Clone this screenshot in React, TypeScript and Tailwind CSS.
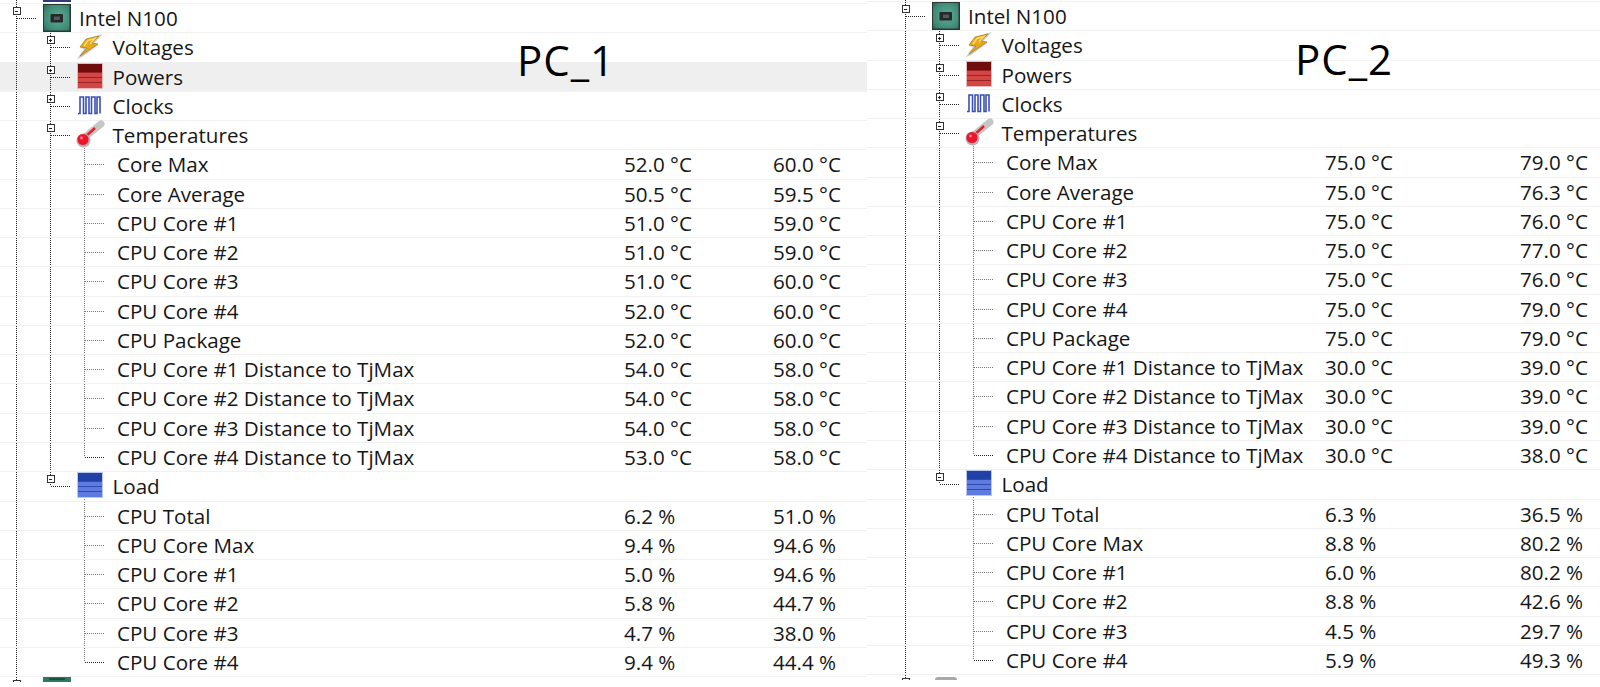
import { useId } from "react";

type Vals = [string, string];

const tempNames = [
  "Core Max",
  "Core Average",
  "CPU Core #1",
  "CPU Core #2",
  "CPU Core #3",
  "CPU Core #4",
  "CPU Package",
  "CPU Core #1 Distance to TjMax",
  "CPU Core #2 Distance to TjMax",
  "CPU Core #3 Distance to TjMax",
  "CPU Core #4 Distance to TjMax",
];
const loadNames = ["CPU Total", "CPU Core Max", "CPU Core #1", "CPU Core #2", "CPU Core #3", "CPU Core #4"];

const pc1 = {
  title: "PC_1",
  temps: [
    ["52.0 °C", "60.0 °C"],
    ["50.5 °C", "59.5 °C"],
    ["51.0 °C", "59.0 °C"],
    ["51.0 °C", "59.0 °C"],
    ["51.0 °C", "60.0 °C"],
    ["52.0 °C", "60.0 °C"],
    ["52.0 °C", "60.0 °C"],
    ["54.0 °C", "58.0 °C"],
    ["54.0 °C", "58.0 °C"],
    ["54.0 °C", "58.0 °C"],
    ["53.0 °C", "58.0 °C"],
  ] as Vals[],
  loads: [
    ["6.2 %", "51.0 %"],
    ["9.4 %", "94.6 %"],
    ["5.0 %", "94.6 %"],
    ["5.8 %", "44.7 %"],
    ["4.7 %", "38.0 %"],
    ["9.4 %", "44.4 %"],
  ] as Vals[],
};

const pc2 = {
  title: "PC_2",
  temps: [
    ["75.0 °C", "79.0 °C"],
    ["75.0 °C", "76.3 °C"],
    ["75.0 °C", "76.0 °C"],
    ["75.0 °C", "77.0 °C"],
    ["75.0 °C", "76.0 °C"],
    ["75.0 °C", "79.0 °C"],
    ["75.0 °C", "79.0 °C"],
    ["30.0 °C", "39.0 °C"],
    ["30.0 °C", "39.0 °C"],
    ["30.0 °C", "39.0 °C"],
    ["30.0 °C", "38.0 °C"],
  ] as Vals[],
  loads: [
    ["6.3 %", "36.5 %"],
    ["8.8 %", "80.2 %"],
    ["6.0 %", "80.2 %"],
    ["8.8 %", "42.6 %"],
    ["4.5 %", "29.7 %"],
    ["5.9 %", "49.3 %"],
  ] as Vals[],
};

const ROW_H = 29.28;

function Line({ x1, y1, x2, y2, light }: { x1: number; y1: number; x2: number; y2: number; light?: boolean }) {
  return (
    <line
      x1={x1}
      y1={y1}
      x2={x2}
      y2={y2}
      stroke={light ? "#777777" : "#222222"}
      strokeWidth="1"
      strokeDasharray="1 1"
      shapeRendering="crispEdges"
    />
  );
}

function ExpandBox({ x, y, open }: { x: number; y: number; open: boolean }) {
  return (
    <g shapeRendering="crispEdges">
      <rect x={x - 3} y={y - 3} width="7" height="7" fill="#fff" stroke="#333" strokeWidth="1" />
      <line x1={x - 1} y1={y + 0.5} x2={x + 2} y2={y + 0.5} stroke="#222" strokeWidth="1" />
      {!open && <line x1={x + 0.5} y1={y - 1} x2={x + 0.5} y2={y + 2} stroke="#222" strokeWidth="1" />}
    </g>
  );
}

function ChipIcon() {
  const id = useId();
  return (
    <g>
      <defs>
        <radialGradient id={id} cx="0.55" cy="0.5" r="0.75">
          <stop offset="0" stopColor="#5cae97" />
          <stop offset="0.7" stopColor="#3f8a76" />
          <stop offset="1" stopColor="#2a6456" />
        </radialGradient>
      </defs>
      <rect x="43" y="0" width="28" height="28" fill="#2a3834" />
      <rect x="44" y="1" width="25.5" height="25.5" fill={`url(#${id})`} />
      <rect x="50.5" y="10" width="12.5" height="8.5" rx="1" fill="#25292a" />
      <rect x="54" y="12.5" width="6" height="3.5" fill="#555758" />
    </g>
  );
}

function BoltIcon() {
  return (
    <g>
      <path d="M77 26 L84 16 L80 15 L90 5 L103 1 L94 10 L98 12 L82 24 Z" fill="#9a9a9a" opacity="0.55" />
      <path d="M86 6 L99 3 L92 10 L98 11 L80 23 L87 15 L80 14 Z" fill="#e8a91e" stroke="#a97a12" strokeWidth="0.7" />
      <path d="M84 13 L88 7.5 L95 5.5 L90 11" fill="none" stroke="#f9dc6a" strokeWidth="1.5" />
    </g>
  );
}

function StackIcon({ top, bar, line, edge }: { top: string; bar: string; line: string; edge: string }) {
  return (
    <g shapeRendering="crispEdges">
      <rect x="77" y="0" width="26" height="26" fill={edge} />
      <rect x="78" y="1" width="24" height="24" fill={bar} />
      <rect x="78" y="1" width="24" height="8" fill={top} />
      <rect x="78" y="9" width="24" height="1" fill={line} />
      <rect x="78" y="14" width="24" height="1" fill={line} />
      <rect x="78" y="19" width="24" height="1" fill={line} />
    </g>
  );
}

function ClockIcon() {
  return (
    <path
      d="M78 21.5 H80 V5 H83.5 V21.5 H86 V5 H89 V21.5 H91.5 V5 H95 V21.5 H97 V5 H100 V21.5"
      fill="none"
      stroke="#3a50b2"
      strokeWidth="1.6"
    />
  );
}

function ThermoIcon() {
  return (
    <g>
      <line x1="85" y1="16" x2="101" y2="3" stroke="#c6c6c6" strokeWidth="7" strokeLinecap="round" />
      <line x1="84" y1="17" x2="95" y2="7" stroke="#ea1c2b" strokeWidth="2.4" />
      <circle cx="83.5" cy="19.5" r="7" fill="#b4b4b4" />
      <circle cx="83" cy="18.5" r="5.6" fill="#f0142a" />
      <circle cx="81.5" cy="17" r="1.4" fill="#ff8a92" />
    </g>
  );
}

function Gutter({ width, children }: { width: number; children?: React.ReactNode }) {
  return (
    <svg width={width} height={ROW_H} className="shrink-0 self-start overflow-visible">
      <Line x1={16.5} y1={0} x2={16.5} y2={ROW_H} />
      {children}
    </svg>
  );
}

function Row({ gutter, width, name, vals, layout, highlight }: {
  gutter: React.ReactNode;
  width: number;
  name?: string;
  vals?: Vals;
  layout: { pad: string; name: string; val: string };
  highlight?: boolean;
}) {
  return (
    <div className={`flex h-[29.28px] shrink-0 items-start border-t border-[#f1f1f1] ${layout.pad} ${highlight ? "bg-[#efefef]" : ""}`}>
      <Gutter width={width}>{gutter}</Gutter>
      {name && (
        <div className={`whitespace-nowrap pt-px leading-[26px] ${vals ? layout.name : ""}`}>{name}</div>
      )}
      {vals && <div className={`whitespace-nowrap pt-px leading-[26px] ${layout.val}`}>{vals[0]}</div>}
      {vals && <div className="whitespace-nowrap pt-px leading-[26px]">{vals[1]}</div>}
    </div>
  );
}

function GroupRow({ name, icon, open, last, layout, highlight }: {
  name: string;
  icon: React.ReactNode;
  open: boolean;
  last?: boolean;
  layout: { pad: string; name: string; val: string };
  highlight?: boolean;
}) {
  return (
    <Row
      width={112.5}
      name={name}
      layout={layout}
      highlight={highlight}
      gutter={
        <>
          <Line x1={50.5} y1={0} x2={50.5} y2={last ? 14 : ROW_H} />
          <Line x1={50.5} y1={14.5} x2={71} y2={14.5} />
          <ExpandBox x={50} y={6.5} open={open} />
          {open && <Line x1={84.5} y1={25} x2={84.5} y2={ROW_H} light />}
          {icon}
        </>
      }
    />
  );
}

function LeafRow({ name, vals, last, inner, layout }: {
  name: string;
  vals: Vals;
  last?: boolean;
  inner: boolean;
  layout: { pad: string; name: string; val: string };
}) {
  return (
    <Row
      width={117}
      name={name}
      vals={vals}
      layout={layout}
      gutter={
        <>
          {inner && <Line x1={50.5} y1={0} x2={50.5} y2={ROW_H} />}
          <Line x1={84.5} y1={0} x2={84.5} y2={last ? 14 : ROW_H} light />
          <Line x1={84.5} y1={14.5} x2={104} y2={14.5} light={!last} />
        </>
      }
    />
  );
}

function Panel({ data, className, topH, layout, highlightPowers, titleClass, topIcon, bottomIcon }: {
  data: typeof pc1;
  className: string;
  topH: string;
  layout: { pad: string; name: string; val: string };
  highlightPowers?: boolean;
  titleClass: string;
  topIcon?: boolean;
  bottomIcon: React.ReactNode;
}) {
  return (
    <div className={`relative flex flex-col self-start overflow-hidden ${className}`}>
      <div className={`shrink-0 overflow-hidden ${topH} ${layout.pad}`}>
        <svg width="117" height="3" className="block">
          <Line x1={16.5} y1={0} x2={16.5} y2={3} />
          {topIcon && <rect x="43" y="0" width="28" height="2" fill="#2c3a78" />}
        </svg>
      </div>
      <Row
        width={79}
        name="Intel N100"
        layout={layout}
        gutter={
          <>
            <Line x1={17} y1={14.5} x2={37} y2={14.5} />
            <ExpandBox x={16} y={6.5} open />
            <ChipIcon />
          </>
        }
      />
      <GroupRow name="Voltages" icon={<BoltIcon />} open={false} layout={layout} />
      <GroupRow
        name="Powers"
        icon={<StackIcon top="#6f0d0d" bar="#d44545" line="#992222" edge="#e6baba" />}
        open={false}
        layout={layout}
        highlight={highlightPowers}
      />
      <GroupRow name="Clocks" icon={<ClockIcon />} open={false} layout={layout} />
      <GroupRow name="Temperatures" icon={<ThermoIcon />} open layout={layout} />
      {tempNames.map((n, i) => (
        <LeafRow key={n} name={n} vals={data.temps[i]} inner last={i === tempNames.length - 1} layout={layout} />
      ))}
      <GroupRow
        name="Load"
        icon={<StackIcon top="#2140a8" bar="#5f7be0" line="#2f4cb0" edge="#bcc7ec" />}
        open
        last
        layout={layout}
      />
      {loadNames.map((n, i) => (
        <LeafRow key={n} name={n} vals={data.loads[i]} inner={false} last={i === loadNames.length - 1} layout={layout} />
      ))}
      <Row
        width={79}
        layout={layout}
        gutter={
          <>
            <ExpandBox x={16} y={6.5} open />
            {bottomIcon}
          </>
        }
      />
      <div className={`absolute text-[42px] leading-none tracking-[1px] text-black ${titleClass}`}>{data.title}</div>
    </div>
  );
}

export default function App() {
  return (
    <div className="flex h-[687px] w-[1600px] overflow-hidden bg-white font-['Open_Sans',sans-serif] text-[20.6px] text-[#161616]">
      <Panel
        data={pc1}
        className="h-[682px] w-[867px] shrink-0"
        topH="h-[3px]"
        topIcon
        highlightPowers
        titleClass="left-[517px] top-[39px]"
        layout={{ pad: "pl-0", name: "w-[507px] shrink-0", val: "w-[149px] shrink-0" }}
        bottomIcon={
          <g>
            <rect x="43" y="0" width="28" height="12" fill="#2f7a5f" />
            <rect x="49" y="1" width="16" height="2" fill="#1f4d3e" />
          </g>
        }
      />
      <Panel
        data={pc2}
        className="h-[680px] flex-1"
        topH="h-px"
        titleClass="left-[428px] top-[38px]"
        layout={{ pad: "pl-[22px]", name: "w-[319px] shrink-0", val: "w-[195px] shrink-0" }}
        bottomIcon={<rect x="46" y="2" width="22" height="8" rx="3" fill="#a9a9a9" />}
      />
    </div>
  );
}
